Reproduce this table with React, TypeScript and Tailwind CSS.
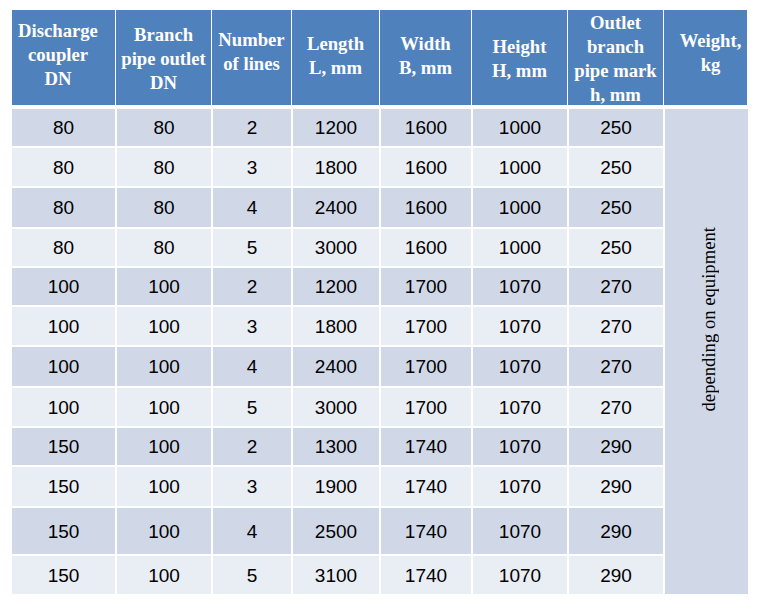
import React from "react";

const widthsH = ["w-[103px]", "w-[95px]", "w-[79px]", "w-[87px]", "w-[91px]", "w-[95px]", "w-[95px]", "w-[83px]"];
const widthsB = ["w-[103px]", "w-[94px]", "w-[78px]", "w-[86px]", "w-[90px]", "w-[94px]", "w-[94px]"];

const headers: { lines: string[]; cls: string }[] = [
  { lines: ["Discharge", "coupler", "DN"], cls: "pb-[5px] pr-[11px]" },
  { lines: ["Branch", "pipe outlet", "DN"], cls: "pt-[2px]" },
  { lines: ["Number", "of lines"], cls: "pb-[11px]" },
  { lines: ["Length", "L, mm"], cls: "pb-[3px]" },
  { lines: ["Width", "B, mm"], cls: "pb-[3px]" },
  { lines: ["Height", "H, mm"], cls: "pt-[3px]" },
  { lines: ["Outlet", "branch", "pipe mark", "h, mm"], cls: "pt-[2px]" },
  { lines: ["Weight,", "kg"], cls: "pb-[10px] pl-[10px]" },
];

const rows: { v: string[]; h: string }[] = [
  { v: ["80", "80", "2", "1200", "1600", "1000", "250"], h: "h-[37px]" },
  { v: ["80", "80", "3", "1800", "1600", "1000", "250"], h: "h-[38px]" },
  { v: ["80", "80", "4", "2400", "1600", "1000", "250"], h: "h-[39px]" },
  { v: ["80", "80", "5", "3000", "1600", "1000", "250"], h: "h-[37px]" },
  { v: ["100", "100", "2", "1200", "1700", "1070", "270"], h: "h-[37px]" },
  { v: ["100", "100", "3", "1800", "1700", "1070", "270"], h: "h-[38px]" },
  { v: ["100", "100", "4", "2400", "1700", "1070", "270"], h: "h-[39px]" },
  { v: ["100", "100", "5", "3000", "1700", "1070", "270"], h: "h-[38px]" },
  { v: ["150", "100", "2", "1300", "1740", "1070", "290"], h: "h-[37px]" },
  { v: ["150", "100", "3", "1900", "1740", "1070", "290"], h: "h-[39px]" },
  { v: ["150", "100", "4", "2500", "1740", "1070", "290"], h: "h-[46px]" },
  { v: ["150", "100", "5", "3100", "1740", "1070", "290"], h: "h-[38px]" },
];

export default function App() {
  return (
    <div className="w-[759px] h-[603px] bg-white pl-[12px] pt-[10px]">
      <div className="flex gap-px h-[95px]">
        {headers.map((hd, i) => (
          <div
            key={i}
            className={`${widthsH[i]} h-full bg-[#4f81bd] flex flex-col items-center justify-center text-white font-bold text-[18.67px] leading-[24px] whitespace-nowrap font-['Liberation_Serif','Times_New_Roman',serif] ${hd.cls}`}
          >
            {hd.lines.map((l, j) => (
              <div key={j}>{l}</div>
            ))}
          </div>
        ))}
      </div>
      <div className="flex gap-[2px] mt-[4px]">
        <div className="flex flex-col gap-[2px]">
          {rows.map((r, i) => (
            <div key={i} className={`flex gap-[2px] ${r.h}`}>
              {r.v.map((c, j) => (
                <div
                  key={j}
                  className={`${widthsB[j]} h-full flex items-center justify-center pt-[2px] text-black text-[19px] font-['Liberation_Sans',Arial,sans-serif] ${i % 2 === 0 ? "bg-[#d0d8e8]" : "bg-[#e9edf4]"}`}
                >
                  {c}
                </div>
              ))}
            </div>
          ))}
        </div>
        <div className="w-[83px] bg-[#d0d8e8] flex items-center justify-center pb-[65px] pl-[5px]">
          <div className="[writing-mode:vertical-rl] rotate-180 text-black text-[18.67px] leading-[20px] whitespace-nowrap font-['Liberation_Serif','Times_New_Roman',serif]">
            depending on equipment
          </div>
        </div>
      </div>
    </div>
  );
}
